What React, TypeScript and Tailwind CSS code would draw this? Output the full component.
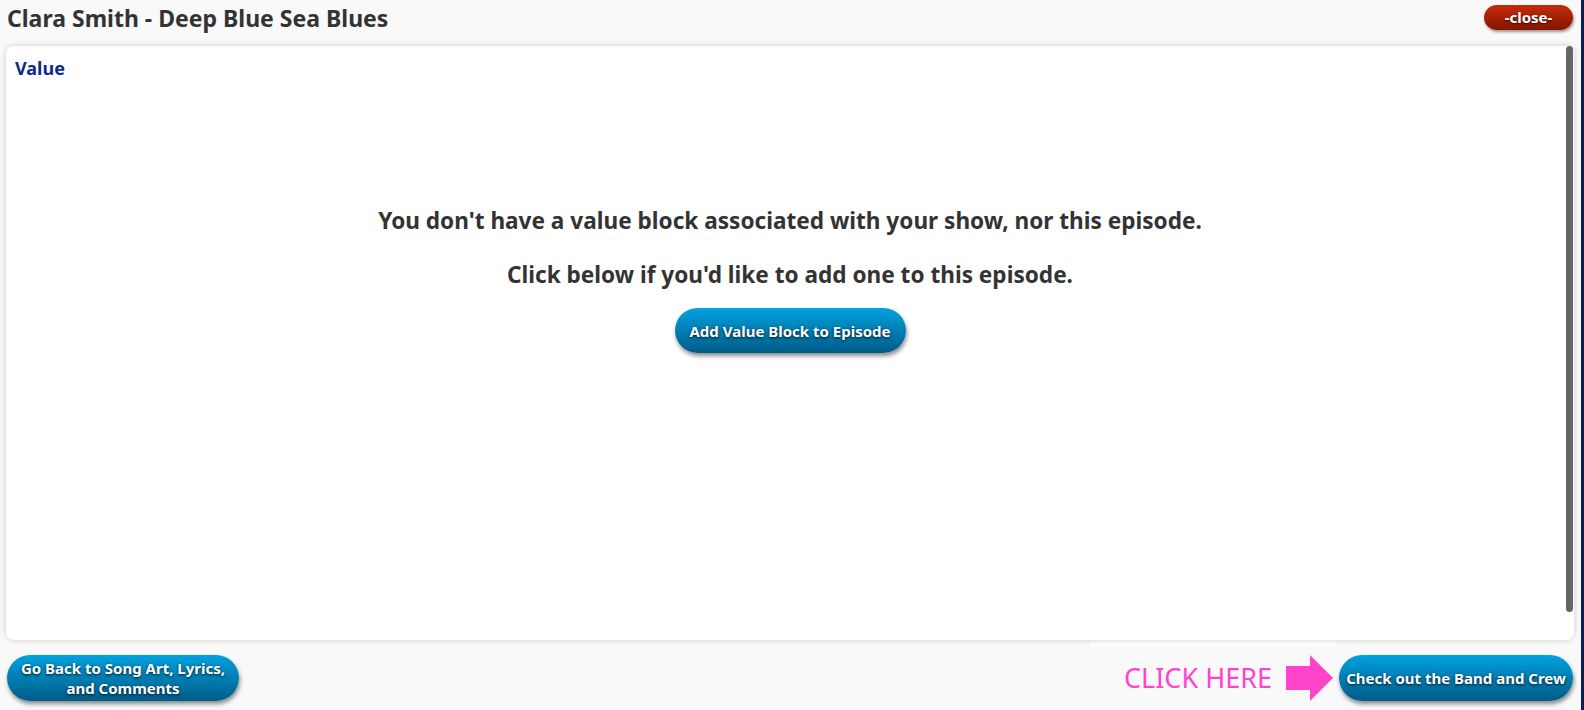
import React from 'react';

const blueBtn =
  "rounded-full bg-gradient-to-b from-[#00a2e0] to-[#005c88] text-white font-bold text-[15px] leading-[20px] shadow-[1px_3px_4px_rgba(0,0,0,0.45)] [text-shadow:0_1px_3px_rgba(0,0,0,0.85)]";

function Arrow() {
  return (
    <svg width="48" height="46" viewBox="0 0 48 46" className="shrink-0">
      <polygon points="0,11 24,11 24,0 47,23 24,46 24,35 0,35" fill="#ff44cc" />
    </svg>
  );
}

export default function App() {
  return (
    <div className="w-[1584px] h-[710px] bg-[#f9f9f9] border-r-[3px] border-[#0b1d5a] flex flex-col overflow-hidden font-['Noto_Sans',sans-serif] text-[#333]">
      {/* Header */}
      <div className="h-[46px] flex items-start justify-between pl-[7px] pr-[8px]">
        <h1 className="text-[23px] font-bold leading-[30px] mt-[3px] text-[#333]">
          Clara Smith - Deep Blue Sea Blues
        </h1>
        <button className="mt-[5px] w-[89px] h-[25px] rounded-full bg-gradient-to-b from-[#c42c0c] to-[#861400] text-white font-bold text-[15px] leading-[25px] shadow-[1px_2px_3px_rgba(0,0,0,0.4)] [text-shadow:0_1px_2px_rgba(0,0,0,0.7)]">
          -close-
        </button>
      </div>

      {/* Panel */}
      <div className="relative ml-[6px] w-[1568px] h-[594px] bg-white rounded-lg shadow-[0_0_6px_rgba(0,0,0,0.18)]">
        <div className="pl-[9px] pt-[10px] text-[18px] font-bold leading-[24px] text-[#0d2a8c]">Value</div>
        <div className="flex flex-col items-center mt-[127px]">
          <p className="text-[22.6px] font-bold leading-[28px]">
            You don't have a value block associated with your show, nor this episode.
          </p>
          <p className="text-[22.6px] font-bold leading-[28px] mt-[26px]">
            Click below if you'd like to add one to this episode.
          </p>
          <button className={`${blueBtn} mt-[19px] w-[231px] h-[45px]`}>Add Value Block to Episode</button>
        </div>
        <div className="absolute right-[1px] top-0 w-[7px] h-[566px] rounded-full bg-[#666]" />
      </div>

      {/* Footer */}
      <div className="flex flex-col">
        <div className="ml-[1091px] w-[245px] h-[7px] bg-white" />
        <div className="flex items-center justify-between pl-[7px] pr-[8px] mt-[8px]">
          <button className={`${blueBtn} w-[232px] h-[46px]`}>
            Go Back to Song Art, Lyrics,
            <br />
            and Comments
          </button>
          <div className="flex items-center">
            <span className="text-[27px] leading-[36px] text-[#ff44cc] mr-[14px]">CLICK HERE</span>
            <Arrow />
            <button className={`${blueBtn} ml-[5px] w-[234px] h-[46px]`}>Check out the Band and Crew</button>
          </div>
        </div>
      </div>
    </div>
  );
}
